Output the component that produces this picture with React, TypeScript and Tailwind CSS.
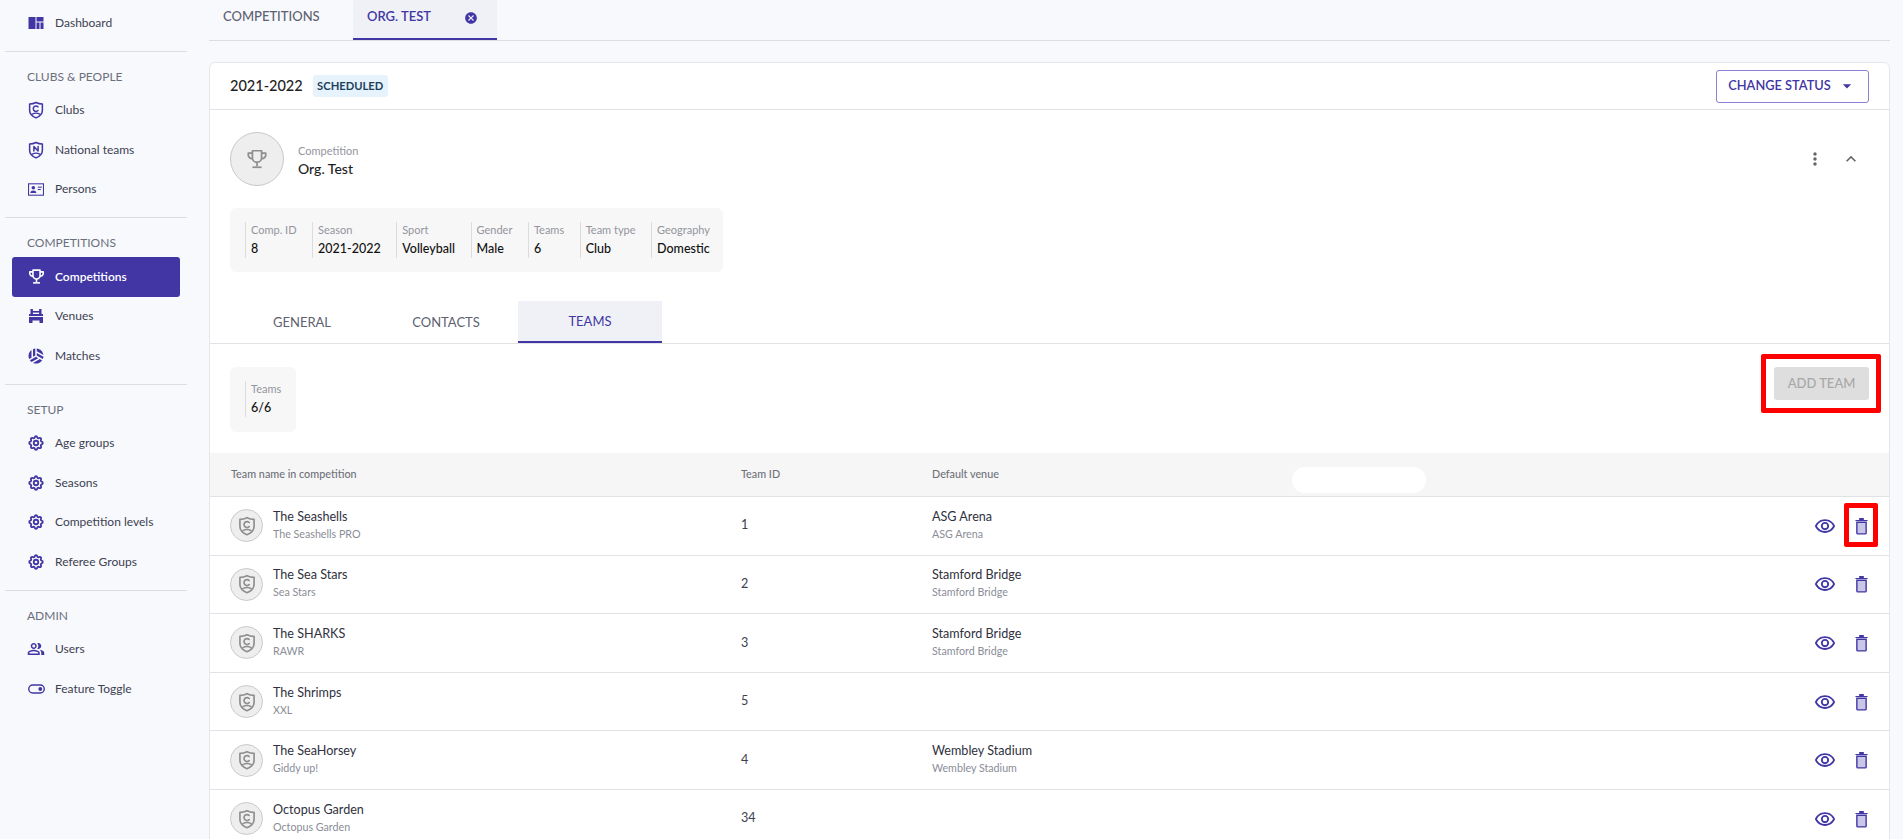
import {
  MdCancel,
  MdArrowDropDown,
  MdMoreVert,
  MdKeyboardArrowUp,
  MdSportsVolleyball,
  MdOutlinePeopleAlt,
  MdOutlineRemoveRedEye,
} from 'react-icons/md';
import { HiOutlineCog } from 'react-icons/hi';
import type { ReactNode } from 'react';

const DashIcon = () => (
  <svg viewBox="0 0 16 16" className="w-[16px] h-[16px]" fill="currentColor">
    <rect x="0.5" y="2" width="7" height="12" />
    <rect x="8.5" y="2" width="7" height="4.5" />
    <rect x="8.5" y="7.5" width="3" height="6.5" />
    <rect x="12.5" y="7.5" width="3" height="6.5" />
  </svg>
);

const Shield = ({ letter, cls = 'w-[18px] h-[18px]' }: { letter: 'C' | 'N'; cls?: string }) => (
  <svg viewBox="0 0 24 24" className={cls} fill="none" stroke="currentColor" strokeWidth="2" strokeLinecap="round" strokeLinejoin="round">
    <path d="M12 2 C15 3.6 17.5 4 20.5 4 V12.5 C20.5 17 16.5 20.5 12 22.5 C7.5 20.5 3.5 17 3.5 12.5 V4 C6.5 4 9 3.6 12 2 Z" />
    <path d="M7 17.5 Q12 14.8 17 17.5" strokeWidth="1.6" />
    {letter === 'C' ? (
      <path d="M14.6 7.8 a3.6 3.6 0 1 0 0 5" />
    ) : (
      <path d="M9.2 13.2 V7.2 L14.8 13.2 V7.2" />
    )}
  </svg>
);

const Trophy = ({ cls, sw = 2.2 }: { cls: string; sw?: number }) => (
  <svg viewBox="0 0 24 24" className={cls} fill="none" stroke="currentColor" strokeWidth={sw} strokeLinejoin="round">
    <path d="M7 3 H17 V10.5 A5 5 0 0 1 7 10.5 Z" />
    <path d="M7 5.5 H2.5 V8 A4 4 0 0 0 7 11.5" />
    <path d="M17 5.5 H21.5 V8 A4 4 0 0 1 17 11.5" />
    <path d="M12 15.5 V20" />
    <path d="M7 21 H17" />
  </svg>
);

const PersonCard = () => (
  <svg viewBox="0 0 18 14" className="w-[16px] h-[13px]" fill="currentColor">
    <rect x="0.6" y="0.6" width="16.8" height="12.8" fill="none" stroke="currentColor" strokeWidth="1.2" />
    <circle cx="6" cy="5" r="2" />
    <path d="M2.6 11 C2.6 8.8 4.4 8 6 8 C7.6 8 9.4 8.8 9.4 11 Z" />
    <rect x="11" y="3.8" width="4.6" height="1.2" />
    <rect x="11" y="6.4" width="3.4" height="1.2" />
  </svg>
);

const VenueIcon = () => (
  <svg viewBox="0 0 16 16" className="w-[16px] h-[16px]" fill="currentColor">
    <rect x="2.5" y="1" width="2.4" height="5" />
    <rect x="11.1" y="1" width="2.4" height="5" />
    <path d="M4 3 H12 V4.6 H4 Z" />
    <path d="M1 6 H15 V8 H1 Z" />
    <path d="M1 9 H15 V15 H11.5 V12.5 H4.5 V15 H1 Z" />
  </svg>
);

const ToggleIcon = () => (
  <svg viewBox="0 0 18 10" className="w-[17px] h-[10px]">
    <rect x="0.8" y="0.8" width="16.4" height="8.4" rx="4.2" fill="none" stroke="currentColor" strokeWidth="1.5" />
    <circle cx="13" cy="5" r="2" fill="currentColor" />
  </svg>
);

const TrashIcon = () => (
  <svg viewBox="0 0 14 19" className="w-[13px] h-[18px]">
    <path d="M2 5.5 H12 V17 A1 1 0 0 1 11 18 H3 A1 1 0 0 1 2 17 Z" fill="#c9c6e8" stroke="#4136a3" strokeWidth="1.5" />
    <path d="M0.5 3 H13.5 V4 H0.5 Z M4.5 1 H9.5 V3 H4.5 Z" fill="#4136a3" />
  </svg>
);

const Gear = () => <HiOutlineCog className="w-[18px] h-[18px]" style={{ strokeWidth: 2.4 }} />;

type Item = { label: string; icon: ReactNode; active?: boolean };

const NAV: { title?: string; items: Item[] }[] = [
  { items: [{ label: 'Dashboard', icon: <DashIcon /> }] },
  {
    title: 'CLUBS & PEOPLE',
    items: [
      { label: 'Clubs', icon: <Shield letter="C" /> },
      { label: 'National teams', icon: <Shield letter="N" /> },
      { label: 'Persons', icon: <PersonCard /> },
    ],
  },
  {
    title: 'COMPETITIONS',
    items: [
      { label: 'Competitions', icon: <Trophy cls="w-[17px] h-[17px]" />, active: true },
      { label: 'Venues', icon: <VenueIcon /> },
      { label: 'Matches', icon: <MdSportsVolleyball className="w-[18px] h-[18px]" /> },
    ],
  },
  {
    title: 'SETUP',
    items: [
      { label: 'Age groups', icon: <Gear /> },
      { label: 'Seasons', icon: <Gear /> },
      { label: 'Competition levels', icon: <Gear /> },
      { label: 'Referee Groups', icon: <Gear /> },
    ],
  },
  {
    title: 'ADMIN',
    items: [
      { label: 'Users', icon: <MdOutlinePeopleAlt className="w-[18px] h-[18px]" /> },
      { label: 'Feature Toggle', icon: <ToggleIcon /> },
    ],
  },
];

const STATS = [
  { label: 'Comp. ID', value: '8' },
  { label: 'Season', value: '2021-2022' },
  { label: 'Sport', value: 'Volleyball' },
  { label: 'Gender', value: 'Male' },
  { label: 'Teams', value: '6' },
  { label: 'Team type', value: 'Club' },
  { label: 'Geography', value: 'Domestic' },
];

const TEAMS = [
  { name: 'The Seashells', sub: 'The Seashells PRO', id: '1', venue: 'ASG Arena' },
  { name: 'The Sea Stars', sub: 'Sea Stars', id: '2', venue: 'Stamford Bridge' },
  { name: 'The SHARKS', sub: 'RAWR', id: '3', venue: 'Stamford Bridge' },
  { name: 'The Shrimps', sub: 'XXL', id: '5', venue: '' },
  { name: 'The SeaHorsey', sub: 'Giddy up!', id: '4', venue: 'Wembley Stadium' },
  { name: 'Octopus Garden', sub: 'Octopus Garden', id: '34', venue: '' },
];

function Sidebar() {
  return (
    <aside className="w-[200px] shrink-0 pt-[3px] pl-[5px] pr-[13px]">
      {NAV.map((sec, i) => (
        <div key={i}>
          {i > 0 && <div className="h-px bg-[#dcdde3] mt-[8px]" />}
          {sec.title && (
            <div className="mt-[17px] mb-[6px] h-4 leading-4 pl-[22px] text-[12px] text-[#6b6f7c]">{sec.title}</div>
          )}
          {sec.items.map(it => (
            <div
              key={it.label}
              className={`ml-[7px] mr-[7px] h-[39.5px] flex items-center rounded-[3px] text-[12px] ${it.active ? 'bg-[#4136a3] text-white font-semibold' : 'text-[#3c4150]'}`}
            >
              <span className={`w-[18px] ml-[15px] mr-[10px] flex justify-center ${it.active ? 'text-white' : 'text-[#4136a3]'}`}>{it.icon}</span>
              {it.label}
            </div>
          ))}
        </div>
      ))}
    </aside>
  );
}

function Avatar({ size, children }: { size: string; children: ReactNode }) {
  return (
    <div className={`${size} rounded-full bg-[#eeeeee] border border-[#c9c9c9] flex items-center justify-center text-[#8f8f8f] shrink-0`}>
      {children}
    </div>
  );
}

function Stat({ label, value }: { label: string; value: string }) {
  return (
    <div className="h-[36px] border-l border-[#dcdcdc] pl-[5px]">
      <div className="text-[11px] leading-[16px] text-[#93959d]">{label}</div>
      <div className="text-[12.5px] leading-[21px] font-medium text-[#111]">{value}</div>
    </div>
  );
}

function TeamRow({ t, first }: { t: (typeof TEAMS)[number]; first: boolean }) {
  return (
    <div className="h-[58.6px] border-b border-[#e2e2e6] flex items-center pl-[20px] pr-[16px] text-[12.6px]">
      <div className="w-[511px] flex items-center">
        <Avatar size="w-[33px] h-[33px]">
          <Shield letter="C" cls="w-[20px] h-[20px]" />
        </Avatar>
        <div className="ml-[10px] pb-[2px]">
          <div className="leading-[17px] text-[#2f3140]">{t.name}</div>
          <div className="leading-[17px] text-[10.7px] text-[#8a8d97]">{t.sub}</div>
        </div>
      </div>
      <div className="w-[191px] text-[#3c4150]">{t.id}</div>
      <div className="flex-1 pb-[2px]">
        {t.venue && (
          <>
            <div className="leading-[17px] text-[#2f3140]">{t.venue}</div>
            <div className="leading-[17px] text-[10.7px] text-[#8a8d97]">{t.venue}</div>
          </>
        )}
      </div>
      <div className="flex items-center gap-[12px]">
        <span className="w-6 h-6 flex items-center justify-center text-[#4136a3]">
          <MdOutlineRemoveRedEye className="w-[22px] h-[22px]" />
        </span>
        <span className="relative w-6 h-6 flex items-center justify-center">
          <TrashIcon />
          {first && <span className="absolute -left-[5px] -right-[5px] -top-[11px] -bottom-[9px] border-[5px] border-[#ff0000] rounded-[2px]" />}
        </span>
      </div>
    </div>
  );
}

export default function App() {
  return (
    <div className="h-[839px] overflow-hidden flex bg-[#f8f9fd] font-['Lato',sans-serif]">
      <Sidebar />
      <main className="w-[1681px] ml-[9px]">
        <div className="h-[41px] flex border-b border-[#dcdde3] text-[13px] font-medium">
          <div className="w-[144px] pl-[14px] flex items-center pb-[6px] text-[#5d6170]">COMPETITIONS</div>
          <div className="w-[144px] pl-[14px] flex items-center pb-[4px] bg-[#f0f1f7] border-b-2 border-[#4136a3] text-[#4136a3] font-semibold">
            ORG. TEST
            <MdCancel className="w-[14px] h-[14px] ml-[33px] mt-[2px]" />
          </div>
        </div>

        <section className="mt-[21px] bg-white rounded-t-md border border-[#e6e6ea]">
          <div className="h-[47px] border-b border-[#e2e2e6] flex items-center pl-[20px] pr-[20px]">
            <span className="text-[14.5px] text-[#1d1d24] font-medium">2021-2022</span>
            <span className="ml-[10px] h-[22px] w-[75px] flex items-center justify-center rounded-[3px] bg-[#e6f3fc] text-[11.2px] font-bold text-[#1c3f5c]">SCHEDULED</span>
            <button className="ml-auto w-[153px] h-[33px] border border-[#8b80d2] rounded-[3px] flex items-center justify-center text-[12.8px] font-semibold text-[#4136a3]">
              CHANGE STATUS
              <MdArrowDropDown className="w-[20px] h-[20px] ml-[6px]" />
            </button>
          </div>

          <div className="pl-[20px] pr-[28px] pt-[22px] flex items-center">
            <Avatar size="w-[54px] h-[54px]">
              <Trophy cls="w-[22px] h-[22px]" sw={1.9} />
            </Avatar>
            <div className="ml-[14px] pt-[2px]">
              <div className="text-[11px] leading-[18px] text-[#93959d]">Competition</div>
              <div className="text-[14px] leading-[18px] font-medium text-[#1d1d24]">Org. Test</div>
            </div>
            <MdMoreVert className="ml-auto w-[20px] h-[20px] text-[#666]" />
            <MdKeyboardArrowUp className="ml-[16px] w-[20px] h-[20px] text-[#666]" />
          </div>

          <div className="ml-[20px] mt-[22px] w-fit h-[64px] rounded-md bg-[#f7f7f7] pl-[15px] pr-[13px] flex items-center gap-[15.5px]">
            {STATS.map(s => (
              <Stat key={s.label} label={s.label} value={s.value} />
            ))}
          </div>

          <div className="mt-[29px] pl-[20px] h-[43px] border-b border-[#e2e2e6] flex text-[13px] text-[#5d6170]">
            <div className="w-[144px] pt-[2px] flex items-center justify-center">GENERAL</div>
            <div className="w-[144px] pt-[2px] flex items-center justify-center">CONTACTS</div>
            <div className="w-[144px] pt-[2px] flex items-center justify-center bg-[#f0f1f7] border-b-2 border-[#4136a3] text-[#4136a3]">TEAMS</div>
          </div>

          <div className="pl-[20px] pr-[20px] pt-[23px] flex justify-between items-start">
            <div className="w-[66px] h-[65px] rounded-md bg-[#f7f7f7] pl-[15px] pt-[14px]">
              <Stat label="Teams" value="6/6" />
            </div>
            <button className="relative w-[95px] h-[33px] rounded-[3px] bg-[#dedede] text-[13px] font-medium text-[#a8a8a8]">
              ADD TEAM
              <span className="absolute -left-[13px] -right-[12px] -top-[13px] -bottom-[13px] border-[5px] border-[#ff0000] rounded-[2px]" />
            </button>
          </div>

          <div className="mt-[21px] h-[44px] bg-[#f6f6f6] border-b border-[#e2e2e6] flex items-center pl-[21px] text-[10.8px] font-medium text-[#6f717a] relative">
            <div className="w-[510px]">Team name in competition</div>
            <div className="w-[191px]">Team ID</div>
            <div>Default venue</div>
            <span className="absolute left-[1082px] top-[14px] w-[134px] h-[26px] rounded-full bg-white" />
          </div>

          {TEAMS.map((t, i) => (
            <TeamRow key={t.id} t={t} first={i === 0} />
          ))}
        </section>
      </main>
    </div>
  );
}
